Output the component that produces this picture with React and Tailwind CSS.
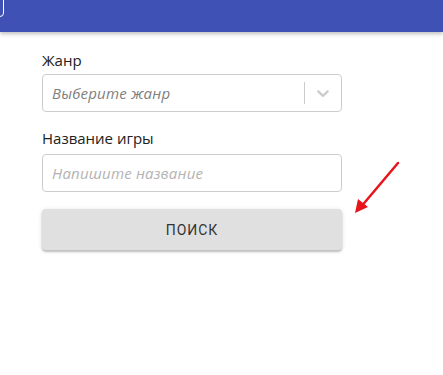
import React from 'react';

function Chevron() {
    return (
        <svg width="20" height="20" viewBox="0 0 20 20" className="fill-[#cccccc]">
            <path d="M4.516 7.548c0.436-0.446 1.043-0.481 1.576 0l3.908 3.747 3.908-3.747c0.533-0.481 1.141-0.446 1.574 0 0.436 0.445 0.408 1.197 0 1.615-0.406 0.418-4.695 4.502-4.695 4.502-0.217 0.223-0.502 0.335-0.787 0.335s-0.57-0.112-0.789-0.335c0 0-4.287-4.084-4.695-4.502s-0.436-1.17 0-1.615z" />
        </svg>
    );
}

function RedArrow() {
    return (
        <svg className="absolute left-[350px] top-[158px]" width="56" height="60" viewBox="0 0 56 60">
            <line x1="48" y1="5" x2="10" y2="50" stroke="#e8141c" strokeWidth="2.5" strokeLinecap="round" />
            <polygon points="5,55 8,41 18,49" fill="#e8141c" />
        </svg>
    );
}

export default function App() {
    return (
        <div className="relative w-[443px] h-[375px] bg-white overflow-hidden font-['Open_Sans',sans-serif]">
            {/* Top bar */}
            <div className="relative h-8 bg-[#3f51b5] shadow-[0_2px_4px_rgba(0,0,0,0.25)]">
                <div className="absolute -left-4 -top-2 w-5 h-[25px] border border-white rounded-[4px]" />
            </div>

            {/* Search form */}
            <div className="ml-[42px] w-[300px] pt-[18px] flex flex-col">
                <label className="text-[15px] leading-5 text-[#212121]">Жанр</label>
                <div className="mt-1 h-[38px] flex items-center border border-[#cccccc] rounded-[4px] bg-white">
                    <span className="flex-1 pl-[9px] text-[15px] tracking-[0.2px] italic text-[#808080]">Выберите жанр</span>
                    <span className="w-px h-[22px] bg-[#cccccc]" />
                    <span className="p-2 flex items-center"><Chevron /></span>
                </div>

                <label className="mt-4 text-[15px] leading-5 text-[#212121]">Название игры</label>
                <div className="mt-[6px] h-[38px] flex items-center border border-[#cccccc] rounded-[4px] bg-white">
                    <span className="pl-[9px] text-[15px] tracking-[0.2px] italic text-[#b3b3b3]">Напишите название</span>
                </div>

                <button className="mt-[17px] h-[41px] w-full rounded-[4px] bg-[#e0e0e0] text-[#333333] text-sm tracking-[1px] font-['Roboto',sans-serif] shadow-[0_2px_2px_rgba(0,0,0,0.2),0_1px_5px_rgba(0,0,0,0.12)]">
                    ПОИСК
                </button>
            </div>

            <RedArrow />
        </div>
    );
}
